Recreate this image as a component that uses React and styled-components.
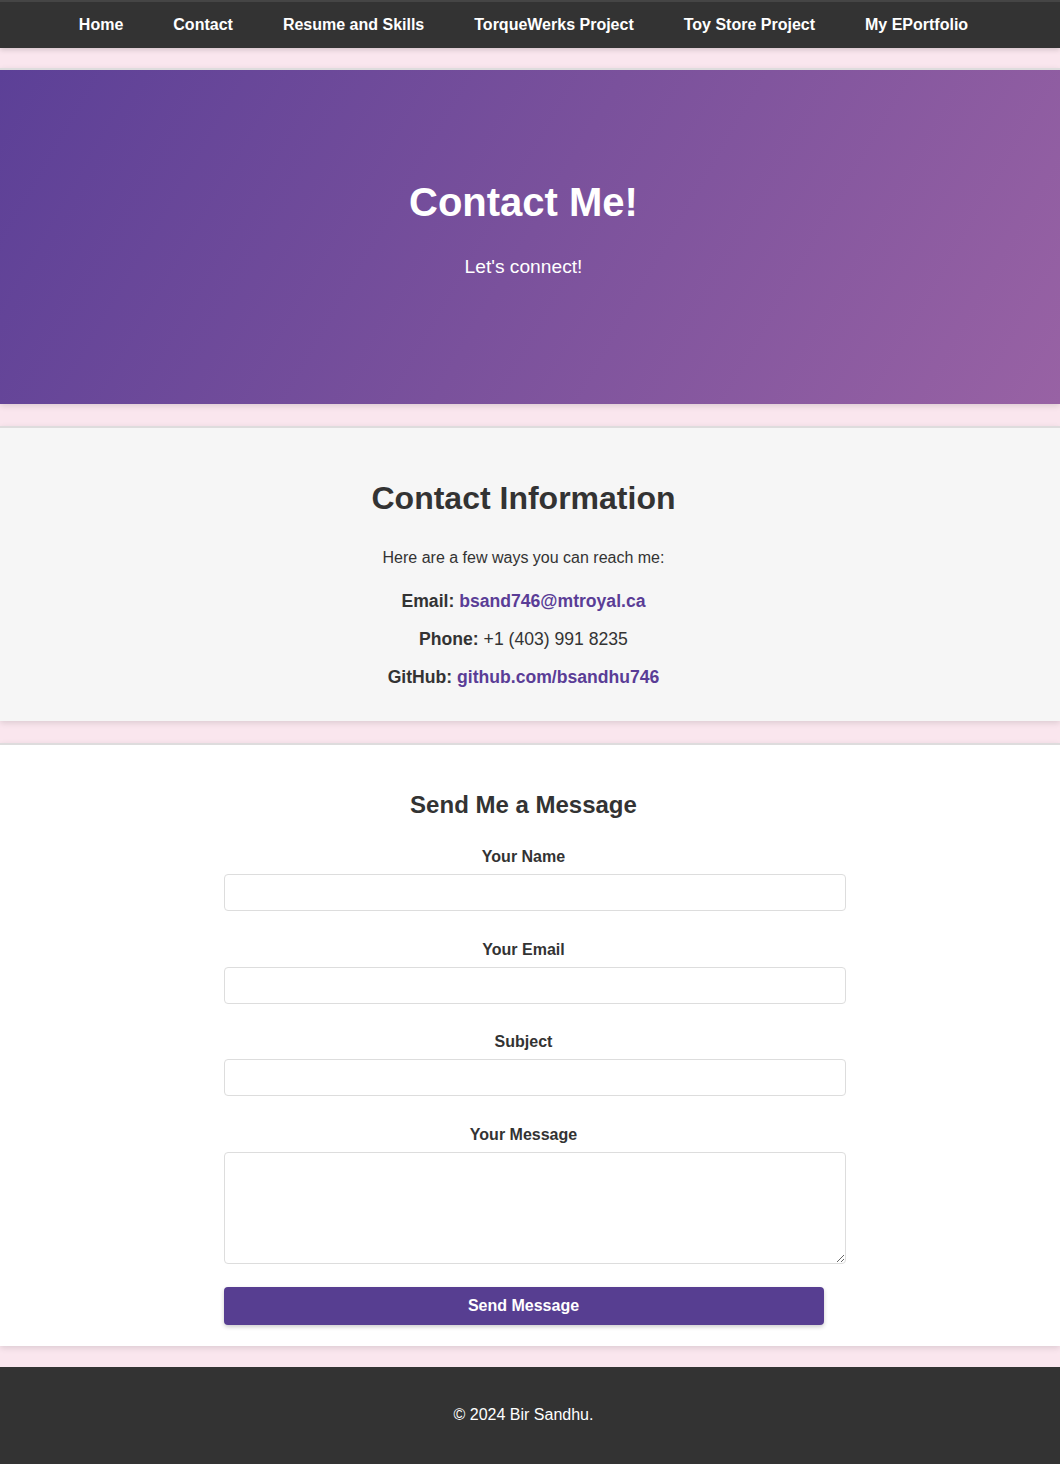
import React from "react";
import styled, { createGlobalStyle } from "styled-components";

const GlobalStyle = createGlobalStyle`
  body {
    margin: 0;
    background: #fae6ee;
    font-family: "Liberation Sans", Arial, sans-serif;
    color: #333;
  }
`;

const NavBar = styled.nav`
  display: flex;
  justify-content: center;
  background: #333;
  border-top: 2px solid #454545;
  padding: 14px 13px 14px 0;
  box-shadow: 0 2px 5px rgba(0, 0, 0, 0.15);
`;

const NavLink = styled.a`
  margin: 0 25px;
  color: #fff;
  font-weight: 700;
  font-size: 16px;
  line-height: 18px;
  text-decoration: none;
`;

const Section = styled.section`
  margin-top: 20px;
  border-top: 2px solid #dedcdd;
  box-shadow: 0 2px 6px rgba(0, 0, 0, 0.12);
  text-align: center;
  padding-right: 13px;
`;

const Hero = styled(Section)`
  background: linear-gradient(120deg, #5c4097 0%, #7a519c 50%, #9862a4 100%);
  color: #fff;
  padding-top: 109px;
  padding-bottom: 126px;
`;

const HeroTitle = styled.h1`
  margin: 0 0 31px;
  font-size: 40px;
  line-height: 46px;
  font-weight: 700;
`;

const HeroText = styled.p`
  margin: 0;
  font-size: 19.2px;
  line-height: 22px;
`;

const InfoSection = styled(Section)`
  margin-top: 22px;
  background: #f6f6f6;
  padding-top: 52px;
  padding-bottom: 34px;
`;

const InfoTitle = styled.h2`
  margin: 0 0 32px;
  font-size: 32px;
  line-height: 37px;
`;

const InfoIntro = styled.p`
  margin: 0 0 24px;
  font-size: 16px;
  line-height: 18px;
`;

const InfoLine = styled.p`
  margin: 0 0 18px;
  font-size: 17.6px;
  line-height: 20px;
  &:last-child {
    margin-bottom: 0;
  }
`;

const Strong = styled.strong`
  font-weight: 700;
`;

const InfoLink = styled.a`
  color: #5a3d96;
  font-weight: 700;
  text-decoration: none;
`;

const FormSection = styled(Section)`
  margin-top: 22px;
  background: #fff;
  padding-top: 46px;
  padding-bottom: 21px;
`;

const FormTitle = styled.h2`
  margin: 0 0 29px;
  font-size: 24px;
  line-height: 28px;
`;

const Form = styled.form`
  max-width: 600px;
  margin: 0 auto;
  text-align: center;
`;

const Group = styled.div`
  margin-bottom: 29.6px;
`;

const Label = styled.label`
  display: block;
  margin-bottom: 8px;
  font-size: 16px;
  line-height: 18px;
  font-weight: 700;
`;

const Input = styled.input`
  display: block;
  width: 100%;
  height: 15px;
  padding: 10px;
  border: 1px solid #ddd;
  border-radius: 4px;
  background: #fff;
  font-family: inherit;
  font-size: 13px;
`;

const TextArea = styled.textarea`
  display: block;
  width: 100%;
  height: 90px;
  padding: 10px;
  border: 1px solid #ddd;
  border-radius: 4px;
  background: #fff;
  font-family: inherit;
  font-size: 13px;
`;

const SubmitButton = styled.button`
  display: block;
  width: 100%;
  margin-top: -6.6px;
  padding: 10px;
  border: none;
  border-radius: 4px;
  background: #573e91;
  color: #fff;
  font-family: inherit;
  font-size: 16px;
  line-height: 18px;
  font-weight: 700;
  box-shadow: 0 2px 4px rgba(0, 0, 0, 0.2);
  cursor: pointer;
`;

const Footer = styled.footer`
  margin-top: 21px;
  background: #333;
  color: #fff;
  text-align: center;
  padding: 39px 13px 40px 0;
  font-size: 16px;
  line-height: 18px;
`;

const links = [
  "Home",
  "Contact",
  "Resume and Skills",
  "TorqueWerks Project",
  "Toy Store Project",
  "My EPortfolio",
];

const fields = [
  { id: "name", label: "Your Name", type: "text" },
  { id: "email", label: "Your Email", type: "email" },
  { id: "subject", label: "Subject", type: "text" },
];

export default function App() {
  return (
    <>
      <GlobalStyle />
      <NavBar>
        {links.map((l) => (
          <NavLink key={l} href="#">
            {l}
          </NavLink>
        ))}
      </NavBar>

      <Hero>
        <HeroTitle>Contact Me!</HeroTitle>
        <HeroText>Let's connect!</HeroText>
      </Hero>

      <InfoSection>
        <InfoTitle>Contact Information</InfoTitle>
        <InfoIntro>Here are a few ways you can reach me:</InfoIntro>
        <InfoLine>
          <Strong>Email:</Strong>{" "}
          <InfoLink href="#">bsand746@mtroyal.ca</InfoLink>
        </InfoLine>
        <InfoLine>
          <Strong>Phone:</Strong> +1 (403) 991 8235
        </InfoLine>
        <InfoLine>
          <Strong>GitHub:</Strong>{" "}
          <InfoLink href="#">github.com/bsandhu746</InfoLink>
        </InfoLine>
      </InfoSection>

      <FormSection>
        <FormTitle>Send Me a Message</FormTitle>
        <Form onSubmit={(e) => e.preventDefault()}>
          {fields.map((f) => (
            <Group key={f.id}>
              <Label htmlFor={f.id}>{f.label}</Label>
              <Input id={f.id} type={f.type} />
            </Group>
          ))}
          <Group>
            <Label htmlFor="message">Your Message</Label>
            <TextArea id="message" />
          </Group>
          <SubmitButton type="submit">Send Message</SubmitButton>
        </Form>
      </FormSection>

      <Footer>© 2024 Bir Sandhu.</Footer>
    </>
  );
}
